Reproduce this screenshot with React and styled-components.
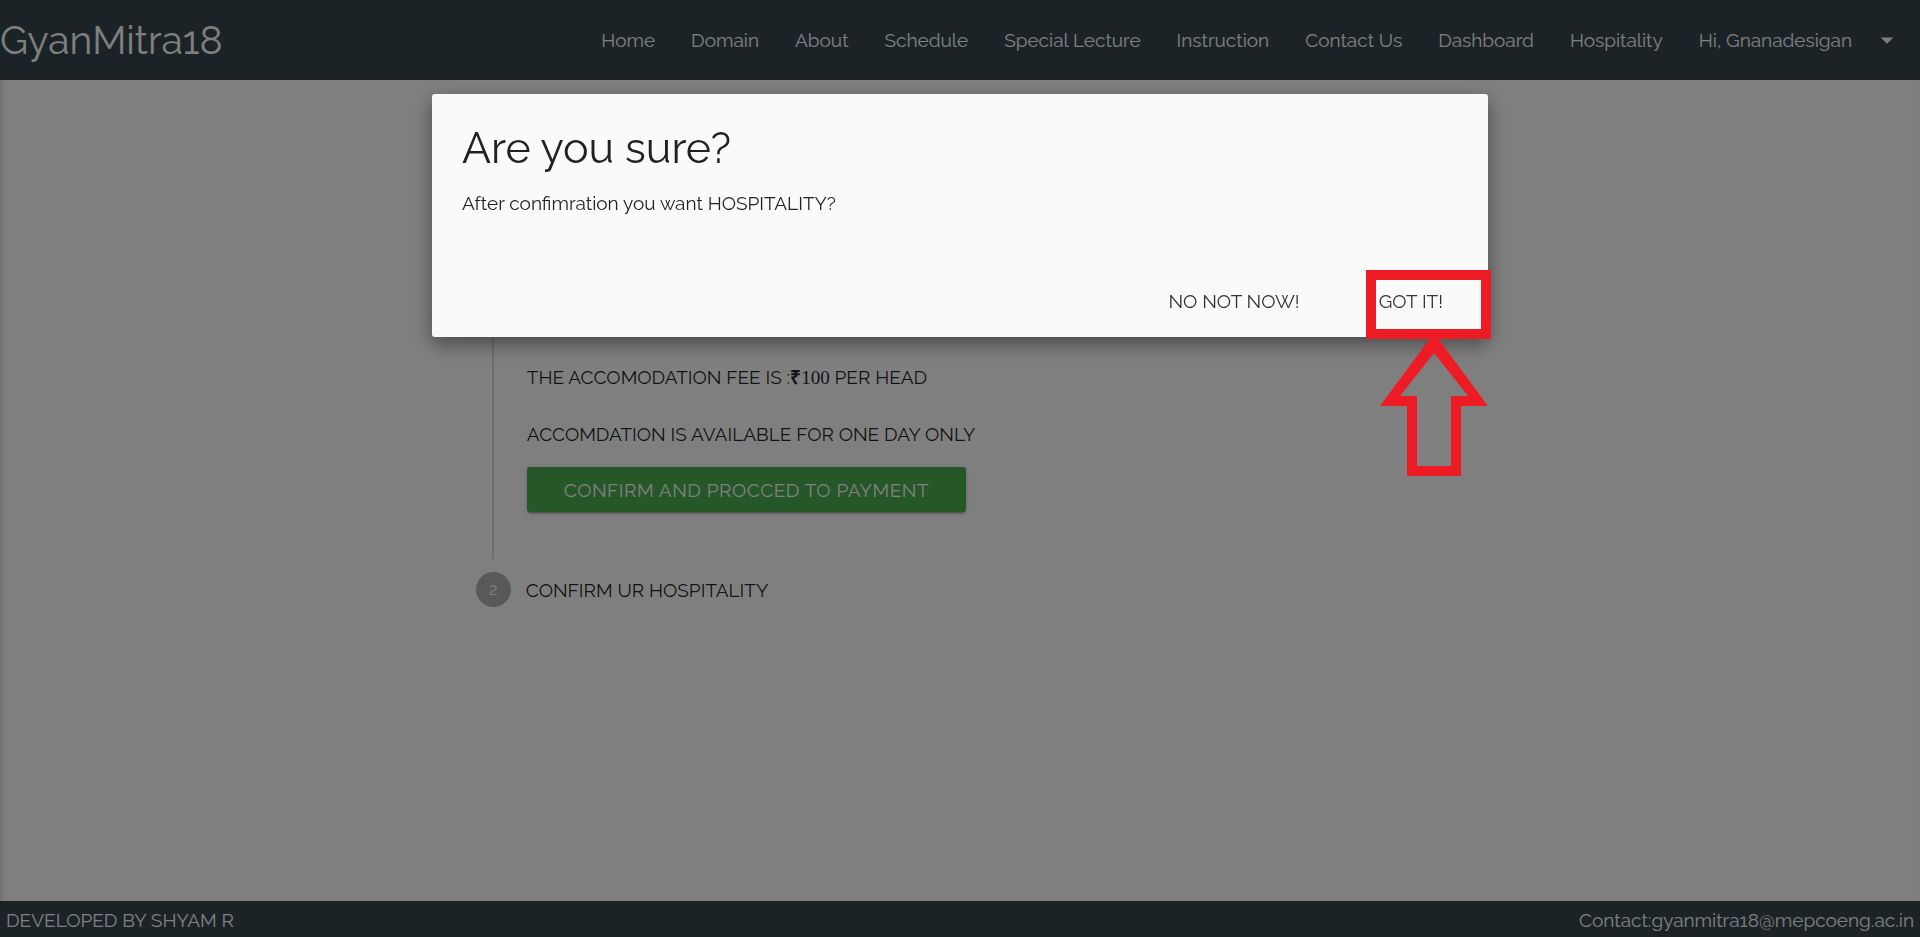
import React from "react";
import styled, { createGlobalStyle } from "styled-components";

const GlobalStyle = createGlobalStyle`
  *, *::before, *::after { box-sizing: border-box; }
  body {
    margin: 0;
    background: #fff;
    color: rgba(0, 0, 0, 0.87);
    font-family: Raleway, Lato, sans-serif;
    font-size: 19px;
    line-height: 28px;
  }
  h1, h2, p, ul, ol { margin: 0; padding: 0; font-weight: 400; }
  ul, ol { list-style: none; }
  a { color: inherit; text-decoration: none; }
  button { font: inherit; border: 0; cursor: pointer; }
`;

const Page = styled.div`
  min-height: 100vh;
  display: flex;
  flex-direction: column;
  box-shadow: inset 2px 0 4px rgba(0, 0, 0, 0.15);
`;

const Header = styled.header`
  display: flex;
  align-items: center;
  justify-content: space-between;
  min-height: 80px;
  background: #37474f;
  color: #fff;
`;

const Brand = styled.a`
  font-size: 39px;
  line-height: 80px;
`;

const NavList = styled.ul`
  display: flex;
`;

const NavLink = styled.a`
  display: flex;
  align-items: center;
  height: 80px;
  padding: 0 18px;
  white-space: nowrap;
`;

const Caret = styled.svg`
  width: 30px;
  height: 30px;
  margin-left: 20px;
  fill: currentColor;
`;

const Main = styled.main`
  flex: 1;
  width: 52%;
  margin: 0 auto;
  padding: 255px 15px 40px;
`;

const StepBody = styled.div`
  display: flex;
  flex-direction: column;
  align-items: flex-start;
  margin-left: 16px;
  padding: 28px 0 47px 33px;
  border-left: 2px solid #dadada;
`;

const Note = styled.p`
  margin-bottom: ${({ $gap }) => $gap}px;
`;

const Amount = styled.span`
  font-family: "Liberation Serif", serif;
`;

const Rupee = styled.b`
  font-family: "Liberation Sans", sans-serif;
`;

const ConfirmButton = styled.button`
  height: 45px;
  padding: 0 37px;
  border-radius: 3px;
  background: #4caf50;
  color: #fff;
  letter-spacing: 0.5px;
  box-shadow: 0 2px 2px rgba(0, 0, 0, 0.14), 0 1px 5px rgba(0, 0, 0, 0.12),
    0 3px 1px -2px rgba(0, 0, 0, 0.2);
`;

const StepTitle = styled.div`
  display: flex;
  align-items: center;
  gap: 15px;
  margin-top: 13px;
`;

const StepNumber = styled.span`
  width: 35px;
  height: 35px;
  border-radius: 50%;
  background: #b2b2b2;
  color: #fff;
  font-size: 17px;
  line-height: 35px;
  text-align: center;
`;

const Footer = styled.footer`
  display: flex;
  align-items: flex-end;
  justify-content: space-between;
  min-height: 36px;
  padding: 0 6px 3px;
  background: #37474f;
  color: #fff;
`;

const Overlay = styled.div`
  position: fixed;
  inset: 0;
  padding-top: 10vh;
  background: rgba(0, 0, 0, 0.5);
`;

const Dialog = styled.section`
  position: relative;
  width: 55%;
  margin: 0 auto;
  border-radius: 3px;
  background: #fafafa;
  box-shadow: 0 8px 17px 0 rgba(0, 0, 0, 0.25), 0 6px 24px 0 rgba(0, 0, 0, 0.22);
`;

const DialogContent = styled.div`
  padding: 31px 30px 50px;
`;

const DialogTitle = styled.h2`
  margin-bottom: 17px;
  font-size: 43px;
  line-height: 47px;
`;

const DialogActions = styled.div`
  display: flex;
  justify-content: flex-end;
  gap: 3px;
  padding: 0 7px 2px;
`;

const FlatButton = styled.button`
  height: 68px;
  padding: 0 38px;
  background: transparent;
  color: #343434;
`;

const Highlight = styled.div`
  position: absolute;
  right: -3px;
  bottom: -2px;
  width: 125px;
  height: 69px;
  border: 10px solid #ed1c24;
  pointer-events: none;
`;

const Arrow = styled.svg`
  position: absolute;
  right: 0;
  top: 100%;
  width: 108px;
  height: 139px;
  fill: #ed1c24;
  pointer-events: none;
`;

const links = [
  "Home", "Domain", "About", "Schedule", "Special Lecture",
  "Instruction", "Contact Us", "Dashboard", "Hospitality",
];

export default function App() {
  return (
    <>
      <GlobalStyle />
      <Page>
        <Header>
          <Brand href="#">GyanMitra18</Brand>
          <nav>
            <NavList>
              {links.map((label) => (
                <li key={label}><NavLink href="#">{label}</NavLink></li>
              ))}
              <li>
                <NavLink href="#">
                  Hi, Gnanadesigan
                  <Caret viewBox="0 0 24 24" aria-hidden="true"><path d="M7 10l5 5 5-5z" /></Caret>
                </NavLink>
              </li>
            </NavList>
          </nav>
        </Header>
        <Main>
          <ol>
            <li>
              <StepBody>
                <Note $gap={28}>
                  THE ACCOMODATION FEE IS :<Amount><Rupee>₹</Rupee>100</Amount> PER HEAD
                </Note>
                <Note $gap={19}>ACCOMDATION IS AVAILABLE FOR ONE DAY ONLY</Note>
                <ConfirmButton type="button">CONFIRM AND PROCCED TO PAYMENT</ConfirmButton>
              </StepBody>
            </li>
            <li>
              <StepTitle><StepNumber>2</StepNumber>CONFIRM UR HOSPITALITY</StepTitle>
            </li>
          </ol>
        </Main>
        <Footer>
          <span>DEVELOPED BY SHYAM R</span>
          <span>Contact:gyanmitra18@mepcoeng.ac.in</span>
        </Footer>
      </Page>
      <Overlay>
        <Dialog role="dialog" aria-modal="true" aria-labelledby="dialog-title">
          <DialogContent>
            <DialogTitle id="dialog-title">Are you sure?</DialogTitle>
            <p>After confimration you want HOSPITALITY?</p>
          </DialogContent>
          <DialogActions>
            <FlatButton type="button">NO NOT NOW!</FlatButton>
            <FlatButton type="button">GOT IT!</FlatButton>
          </DialogActions>
          <Arrow viewBox="0 0 108 139" aria-hidden="true">
            <path
              fillRule="evenodd"
              d="M51 0h6L108 69H81v70H27V69H0zM54 16L20 59h17v70h34V59h17z"
            />
          </Arrow>
          <Highlight />
        </Dialog>
      </Overlay>
    </>
  );
}
